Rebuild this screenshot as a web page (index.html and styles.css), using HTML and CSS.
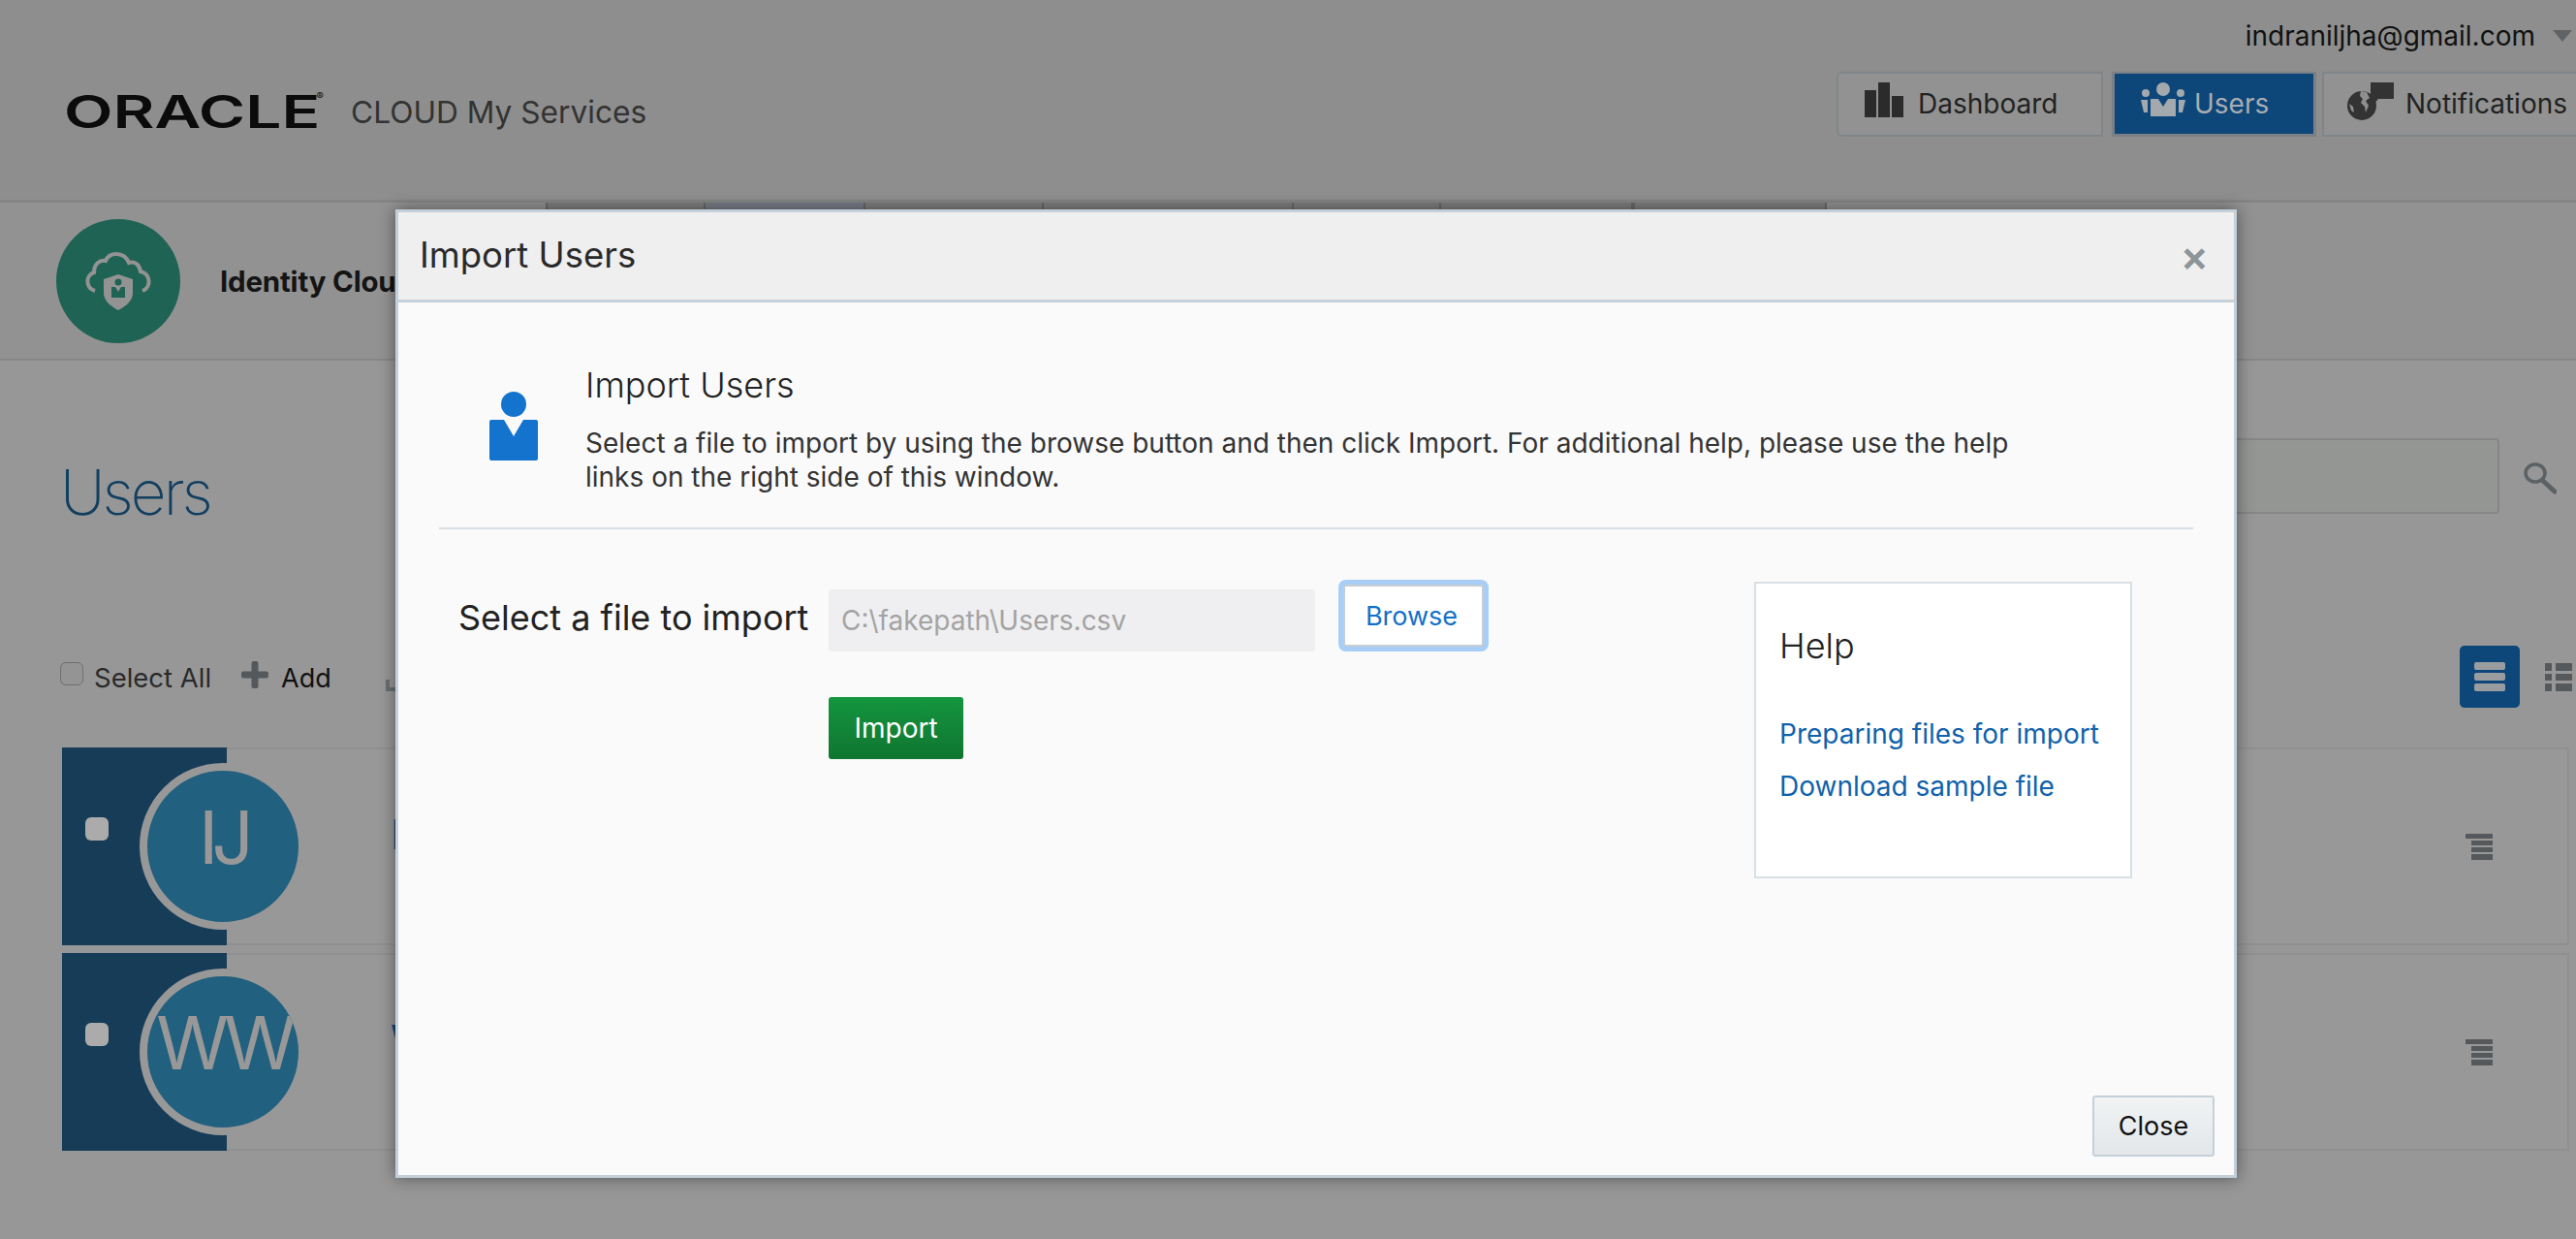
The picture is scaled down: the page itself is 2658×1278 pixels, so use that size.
FILE: index.html
```html
<!DOCTYPE html>
<html lang="en">
<head>
    <meta charset="UTF-8">
    <title>Oracle Cloud My Services - Users</title>
    <link rel="stylesheet" href="styles.css">
</head>
<body>
    <header class="top">
        <div class="brand">
            <div class="logo"><span class="logo-word">ORACLE</span><span class="logo-reg">®</span></div>
            <span class="brand-name">CLOUD My Services</span>
        </div>
        <div class="top-right">
            <div class="account">
                <span>indraniljha@gmail.com</span>
                <span class="caret"></span>
            </div>
            <nav class="nav">
                <a class="nav-btn nav-dashboard">
                    <svg width="40" height="36" viewBox="0 0 40 36"><path fill="#2b2b2b" d="M0 8h12v28H0zM14 0h12v36H14zM28 14h12v22H28z"/></svg>
                    Dashboard
                </a>
                <a class="nav-btn nav-users">
                    <svg width="46" height="36" viewBox="0 0 46 36" fill="#a3a9ad">
                        <circle cx="23" cy="7" r="7"/>
                        <circle cx="5" cy="11" r="4"/>
                        <circle cx="41" cy="11" r="4"/>
                        <path d="M10 17h8l5 8 5-8h8v18H10z"/>
                        <path d="M0 18h7v13H3zM46 18h-7v13h4z"/>
                    </svg>
                    Users
                </a>
                <a class="nav-btn nav-notify">
                    <svg width="48" height="40" viewBox="0 0 48 40">
                        <circle cx="15" cy="24" r="15" fill="#333"/>
                        <path fill="#8f8f8f" d="M14 9l6 1 3 6-4 3 3 5-3 7-1-6-4-4 2-4-3-3zM2 22l4 3 1 6-3-2z"/>
                        <path fill="#333" d="M24 0h24v17H32l-7 8 1-8h-2z"/>
                    </svg>
                    Notifications
                </a>
            </nav>
        </div>
    </header>

    <section class="service">
        <div class="service-icon">
            <svg width="68" height="60" viewBox="0 0 68 60" fill="none" stroke="#939393" stroke-width="4">
                <path d="M10 40C0 37 0 24 9 21 9 12 15 8 21 9 23 4 27 2 32 2c7 0 11 4 13 9 6-2 11 2 12 9 10 2 12 16 2 20"/>
                <path fill="#939393" stroke="none" d="M34 23l15 5v14c0 9-8 14-15 18-7-4-15-9-15-18V28z"/>
                <circle cx="34" cy="31" r="3.500" fill="#1f6355" stroke="none"/>
                <path fill="#1f6355" stroke="none" d="M27 36h4l3 5 3-5h4v11H27z"/>
            </svg>
        </div>
        <div class="service-name">Identity Clou</div>
        <ul class="tabs">
            <li class="tab tab-first"></li>
            <li class="tab tab-active"></li>
            <li class="tab tab-3"></li>
            <li class="tab tab-4"></li>
            <li class="tab tab-5"></li>
            <li class="tab tab-6"></li>
            <li class="tab tab-6"></li>
        </ul>
    </section>

    <main class="main">
        <div class="title-row">
            <h1 class="page-title">Users</h1>
            <div class="search">
                <input class="search-input" type="text">
                <svg class="search-icon" width="34" height="33" viewBox="0 0 34 33" fill="none" stroke="#5b6164">
                    <ellipse cx="12" cy="11" rx="10" ry="9" stroke-width="3.5"/>
                    <path d="M20 19l12 11" stroke-width="5" stroke-linecap="round"/>
                </svg>
            </div>
        </div>

        <div class="toolbar">
            <span class="check-all"></span>
            <span class="select-all">Select All</span>
            <svg class="plus" width="28" height="28" viewBox="0 0 28 28"><path fill="#55595c" d="M10.5 2q0-2 2-2h3q2 0 2 2v8.500H26q2 0 2 2v3q0 2-2 2h-8.500V26q0 2-2 2h-3q-2 0-2-2v-8.500H2q-2 0-2-2v-3q0-2 2-2h8.500z"/></svg>
            <span class="add">Add</span>
            <svg class="import-icon" width="30" height="28" viewBox="0 0 30 28"><path fill="#6b6f72" d="M0 14h4v8h26v4H0zM14 2h4v12h-4z"/></svg>
            <div class="view-switch">
                <span class="view-btn">
                    <i></i><i></i><i></i>
                </span>
                <svg width="28" height="29" viewBox="0 0 28 29" fill="#55595c">
                    <path d="M0 0h7v8H0zM0 11h7v7H0zM0 21h7v8H0zM11 0h17v8H11zM11 11h17v7H11zM11 21h17v8H11z"/>
                </svg>
            </div>
        </div>

        <div class="card">
            <div class="card-side"><span class="card-check"></span></div>
            <div class="avatar">IJ</div>
            <a class="card-name">I</a>
            <svg class="card-menu" width="28" height="27" viewBox="0 0 28 27" fill="#55595c"><path d="M0 0h28v5H0zM6 7h22v5H6zM6 14h22v5H6zM6 21h22v6H6z"/></svg>
        </div>
        <div class="card">
            <div class="card-side"><span class="card-check"></span></div>
            <div class="avatar">WW</div>
            <a class="card-name">W</a>
            <svg class="card-menu" width="28" height="27" viewBox="0 0 28 27" fill="#55595c"><path d="M0 0h28v5H0zM6 7h22v5H6zM6 14h22v5H6zM6 21h22v6H6z"/></svg>
        </div>
    </main>

    <div class="modal">
        <div class="modal-header">
            <h2 class="modal-title">Import Users</h2>
            <span class="modal-x">×</span>
        </div>
        <div class="modal-body">
            <div class="intro">
                <svg class="intro-icon" width="50" height="71" viewBox="0 0 50 71" fill="#1473cd">
                    <circle cx="25" cy="13" r="13"/>
                    <path d="M2 29h13l10 17 10-17h13q2 0 2 2v38q0 2-2 2H2q-2 0-2-2V31q0-2 2-2z"/>
                </svg>
                <div class="intro-text">
                    <h3 class="intro-title">Import Users</h3>
                    <p class="intro-desc">Select a file to import by using the browse button and then click Import. For additional help, please use the help links on the right side of this window.</p>
                </div>
            </div>
            <div class="columns">
                <div class="form">
                    <label class="form-label">Select a file to import</label>
                    <div class="file-row">
                        <input class="file-input" type="text" value="C:\fakepath\Users.csv" readonly>
                        <button class="browse-btn">Browse</button>
                    </div>
                    <span></span>
                    <button class="import-btn">Import</button>
                </div>
                <aside class="help">
                    <h4 class="help-title">Help</h4>
                    <a class="help-link">Preparing files for import</a>
                    <a class="help-link">Download sample file</a>
                </aside>
            </div>
            <div class="modal-footer">
                <button class="close-btn">Close</button>
            </div>
        </div>
    </div>
</body>
</html>
```

FILE: styles.css
```css
* {
    box-sizing: border-box;
}

html, body {
    height: 100%;
}

body {
    margin: 0;
    overflow: hidden;
    background: #979797;
    font-family: Inter, "Liberation Sans", sans-serif;
    color: #222;
}

/* header */
.top {
    height: 209px;
    background: #8e8e8e;
    border-bottom: 3px solid #848686;
    display: flex;
    justify-content: space-between;
}

.brand {
    display: flex;
    align-items: center;
    padding: 48px 0 0 66px;
    height: 182px;
}

.logo {
    width: 266px;
    height: 34px;
    position: relative;
    color: #0b0b0b;
}

.logo-word {
    display: block;
    font-size: 46px;
    line-height: 34px;
    font-weight: 600;
    transform: scaleX(1.43);
    transform-origin: left center;
}

.logo-reg {
    position: absolute;
    right: -2px;
    top: -6px;
    font-size: 11px;
    line-height: 14px;
}

.brand-name {
    margin-left: 30px;
    font-size: 31.7px;
    color: #333;
}

.top-right {
    margin-right: -12px;
    width: 775px;
}

.account {
    display: flex;
    justify-content: flex-end;
    align-items: center;
    gap: 18px;
    height: 74px;
    padding: 0 16px 0 0;
    font-size: 28px;
    color: #111;
}

.caret {
    width: 0;
    height: 0;
    border-left: 10px solid transparent;
    border-right: 10px solid transparent;
    border-top: 12px solid #5f6366;
}

.nav {
    display: flex;
    gap: 9px;
}

.nav-btn {
    height: 67px;
    display: flex;
    align-items: flex-start;
    padding-top: 9px;
    font-size: 28px;
    color: #222;
    border: 2px solid #7f8588;
    background: #929292;
    line-height: 44px;
}

.nav-btn svg {
    flex: none;
}

.nav-dashboard {
    width: 275px;
    padding-left: 27px;
    gap: 15px;
    border-radius: 6px 0 0 6px;
}

.nav-users {
    width: 211px;
    padding-left: 27px;
    gap: 9px;
    background: #0d4679;
    border: 3px solid #7b7f86;
    border-top-width: 2px;
    color: #a7adb3;
}

.nav-notify {
    width: 274px;
    padding-left: 24px;
    gap: 12px;
    margin-left: -3px;
}

/* service bar */
.service {
    height: 163px;
    background: #929292;
    border-bottom: 2px solid #868686;
    display: flex;
}

.service-icon {
    width: 128px;
    height: 128px;
    margin: 17px 0 0 58px;
    border-radius: 50%;
    background: #1f6355;
    display: flex;
    align-items: center;
    justify-content: center;
}

.service-name {
    width: 181px;
    margin: 65px 155px 0 41px;
    font-size: 29.5px;
    line-height: 32px;
    font-weight: 700;
    letter-spacing: -0.2px;
    color: #141414;
    white-space: nowrap;
}

.tabs {
    list-style: none;
    display: flex;
    margin: 0;
    padding: 0;
    height: 50px;
}

.tab {
    width: 163px;
    background: #7e7e7e;
    border-left: 2px solid #686868;
}

.tab-active { width: 165px; background: #787c86; }
.tab-3 { width: 184px; }
.tab-4 { width: 258px; }
.tab-5 { width: 152px; }
.tab-6 { width: 200px; border-right: 2px solid #686868; }

/* page content */
.main {
    padding: 80px 7px 0 64px;
}

.title-row {
    height: 78px;
    display: flex;
    align-items: center;
    justify-content: space-between;
}

.page-title {
    margin: 32px 0 0 -2px;
    font-size: 64px;
    font-weight: 200;
    letter-spacing: -3px;
    color: #123f60;
}

.search {
    display: flex;
    align-items: center;
    margin-right: 13px;
}

.search-input {
    width: 1000px;
    height: 78px;
    background: #949694;
    border: 2px solid #858787;
    border-radius: 4px;
}

.search-icon {
    margin-left: 25px;
    margin-top: 4px;
}

.toolbar {
    display: flex;
    align-items: center;
    margin-top: 136px;
    height: 64px;
    margin-bottom: 41px;
}

.check-all {
    width: 24px;
    height: 24px;
    margin: 0 11px 6px -2px;
    border: 1px solid #6f6f6f;
    border-radius: 6px;
    background: #949494;
}

.select-all {
    width: 152px;
    margin-top: 2px;
    font-size: 27.5px;
    color: #2a2a2a;
}

.plus {
    margin: -4px 13px 0 0;
}

.add {
    width: 108px;
    margin-top: 2px;
    font-size: 27px;
    color: #111;
}

.import-icon {
    margin-top: 6px;
}

.view-switch {
    margin-left: auto;
    margin-right: -3px;
    display: flex;
    align-items: center;
    gap: 26px;
}

.view-btn {
    width: 62px;
    height: 64px;
    border-radius: 5px;
    background: #0d4679;
    display: flex;
    flex-direction: column;
    justify-content: center;
    align-items: center;
    gap: 3px;
}

.view-btn i {
    width: 32px;
    height: 8px;
    border-radius: 2px;
    background: #9a9da0;
}

.card {
    display: flex;
    align-items: center;
    height: 204px;
    margin-bottom: 8px;
    width: 2587px;
    background: #989898;
    border: 2px solid #909090;
    border-left: 0;
}

.card-side {
    width: 170px;
    height: 204px;
    flex: none;
    background: #163c58;
    padding: 72px 0 0 24px;
}

.card-check {
    display: block;
    width: 24px;
    height: 24px;
    border-radius: 6px;
    background: #ababab;
}

.avatar {
    flex: none;
    width: 172px;
    height: 172px;
    margin-left: -90px;
    border: 8px solid #989898;
    border-radius: 50%;
    background: #22607f;
    color: #989898;
    font-size: 76px;
    font-weight: 400;
    letter-spacing: -7px;
    text-align: center;
    line-height: 136px;
    white-space: nowrap;
    overflow: hidden;
}

.card-name {
    margin-left: 87px;
    font-size: 42px;
    color: #0e4a7a;
    margin-bottom: 26px;
}

.card-menu {
    margin-left: auto;
    margin-right: 77px;
}

/* dialog */
.modal {
    position: absolute;
    left: 408px;
    top: 216px;
    width: 1900px;
    height: 999px;
    display: flex;
    flex-direction: column;
    border: 3px solid #c3cfd9;
    background: #fafafa;
    box-shadow: 0 0 16px rgba(0, 0, 0, 0.45);
}

.modal-header {
    height: 93px;
    flex: none;
    background: #efefef;
    border-bottom: 3px solid #c5d0d9;
    display: flex;
    align-items: center;
    justify-content: space-between;
    padding: 0 26px 0 22px;
}

.modal-title {
    margin: 0 0 3px;
    font-size: 36.5px;
    font-weight: 400;
    color: #2a2a2a;
}

.modal-x {
    font-size: 44px;
    line-height: 44px;
    font-weight: 600;
    color: #8d9599;
}

.modal-body {
    flex: 1;
    display: flex;
    flex-direction: column;
    padding: 0 42px;
    min-height: 0;
}

.intro {
    height: 234px;
    flex: none;
    display: flex;
    border-bottom: 2px solid #d8e0e6;
    padding-left: 52px;
}

.intro-icon {
    flex: none;
    margin-top: 92px;
}

.intro-text {
    margin-left: 49px;
    padding-top: 61px;
    width: 1500px;
}

.intro-title {
    margin: 0;
    font-size: 36px;
    font-weight: 300;
    line-height: 48px;
    color: #222;
}

.intro-desc {
    margin: 19px 0 0;
    font-size: 28px;
    line-height: 35px;
    color: #333;
}

.columns {
    display: flex;
    justify-content: space-between;
    padding: 54px 63px 0 20px;
}

.form {
    display: grid;
    grid-template-columns: 382px auto;
    align-content: start;
    row-gap: 44px;
}

.form-label {
    font-size: 36px;
    line-height: 40px;
    color: #222;
    align-self: center;
    margin-top: 2px;
    white-space: nowrap;
}

.file-row {
    display: flex;
    align-items: center;
}

.file-input {
    width: 502px;
    height: 64px;
    padding: 0 13px;
    margin-top: 8px;
    border: 0;
    border-radius: 3px;
    background: #efeff1;
    font-family: inherit;
    font-size: 28px;
    color: #a3a3a3;
}

.browse-btn {
    width: 145px;
    height: 64px;
    margin-left: 29px;
    margin-top: -2px;
    padding: 0 8px 0 4px;
    border: 2px solid #c5cdd3;
    border-radius: 3px;
    background: #fff;
    box-shadow: 0 0 0 5px #a8cef7;
    font-family: inherit;
    font-size: 27px;
    color: #1270c8;
}

.import-btn {
    width: 139px;
    height: 64px;
    border: 0;
    border-radius: 3px;
    background: linear-gradient(#14953f, #0f7530);
    font-family: inherit;
    font-size: 28px;
    color: #fff;
    margin-top: 3px;
}

.help {
    width: 390px;
    height: 306px;
    background: #fff;
    border: 2px solid #d8e0e6;
    padding: 0 0 0 24px;
    display: flex;
    flex-direction: column;
    align-items: flex-start;
}

.help-title {
    margin: 42px 0 52px;
    font-size: 36px;
    line-height: 44px;
    font-weight: 300;
    color: #222;
}

.help-link {
    font-size: 28px;
    line-height: 34px;
    margin-bottom: 20px;
    color: #0f62ab;
    white-space: nowrap;
}

.modal-footer {
    margin-top: auto;
    margin-right: -22px;
    padding-bottom: 19px;
    display: flex;
    justify-content: flex-end;
}

.close-btn {
    width: 126px;
    height: 63px;
    border: 2px solid #c5d0d9;
    border-radius: 3px;
    background: linear-gradient(#f1f3f4, #e3e7ea);
    font-family: inherit;
    font-size: 27px;
    color: #111;
}
```
